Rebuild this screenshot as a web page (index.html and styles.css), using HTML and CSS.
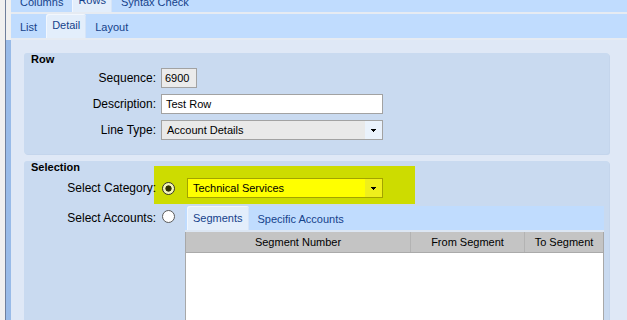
FILE: index.html
```html
<!DOCTYPE html>
<html lang="en">
<head>
  <meta charset="UTF-8" />
  <title>Row Detail</title>
  <link rel="stylesheet" href="styles.css">
</head>
<body>
  <div class="frame">
    <div class="strip strip-top">
      <span class="tab">Columns</span>
      <span class="tab active">Rows</span>
      <span class="tab">Syntax Check</span>
    </div>
    <div class="strip strip-sub">
      <span class="tab">List</span>
      <span class="tab active">Detail</span>
      <span class="tab">Layout</span>
    </div>

    <div class="content">
      <div class="panel row-panel">
        <div class="panel-title">Row</div>
        <div class="form-rows">
          <div class="form-row">
            <label class="label">Sequence:</label>
            <div class="field seq">6900</div>
          </div>
          <div class="form-row">
            <label class="label">Description:</label>
            <div class="field text">Test Row</div>
          </div>
          <div class="form-row">
            <label class="label">Line Type:</label>
            <div class="field combo">
              <span class="combo-text">Account Details</span>
              <span class="trigger">
                <svg width="5" height="3" viewBox="0 0 5 3"><rect x="0" y="0" width="5" height="1"/><rect x="1" y="1" width="3" height="1"/><rect x="2" y="2" width="1" height="1"/></svg>
              </span>
            </div>
          </div>
        </div>
      </div>

      <div class="panel sel-panel">
        <div class="panel-title">Selection</div>
        <div class="sel-row first">
          <label class="label">Select Category:</label>
          <div class="highlight">
            <span class="radio checked"></span>
            <div class="field combo yellow">
              <span class="combo-text">Technical Services</span>
              <span class="trigger">
                <svg width="5" height="3" viewBox="0 0 5 3"><rect x="0" y="0" width="5" height="1"/><rect x="1" y="1" width="3" height="1"/><rect x="2" y="2" width="1" height="1"/></svg>
              </span>
            </div>
          </div>
        </div>
        <div class="sel-row second">
          <label class="label">Select Accounts:</label>
          <span class="radio"></span>
          <div class="tabpanel">
            <div class="strip strip-inner">
              <span class="tab active">Segments</span>
              <span class="tab">Specific Accounts</span>
            </div>
            <div class="grid">
              <div class="grid-head">
                <div class="col c1">Segment Number</div>
                <div class="col c2">From Segment</div>
                <div class="col c3">To Segment</div>
              </div>
              <div class="grid-body"></div>
            </div>
          </div>
        </div>
      </div>
    </div>
  </div>
</body>
</html>
```

FILE: styles.css
```css
body {
  margin: 0;
  background: #f0f0f0;
  font-family: "Liberation Sans", Arial, sans-serif;
  font-size: 11px;
  color: #000;
  overflow: hidden;
}
.frame {
  margin-left: 5px;
  border-left: 1px solid #6f7f9c;
  height: 320px;
  overflow: hidden;
}

/* tab strips */
.strip {
  display: flex;
  gap: 3px;
  background: #c0dcfe;
  border-bottom: 2px solid #e6ebf2;
}
.tab {
  display: block;
  padding: 2px 6px 0;
  line-height: 22px;
  color: #15428b;
  white-space: nowrap;
}
.tab:first-child {
  margin-left: 3px;
}
.tab.active {
  padding-top: 0;
  padding-bottom: 2px;
  background: #e3eefb;
  border-radius: 3px 3px 0 0;
  box-shadow: inset 1px 1px 0 #f2f7fe, inset -1px 0 0 #d6e4f7;
}
.strip-top {
  margin-left: 5px;
  height: 12px;
  overflow: hidden;
}
.strip-top .tab {
  margin-top: -8px;
  height: 18px;
  line-height: 16px;
  padding-top: 2px;
}
.strip-top .tab.active {
  padding-top: 0;
  height: 20px;
}
.strip-sub {
  margin-left: 5px;
  height: 24px;
}

/* content */
.content {
  box-sizing: border-box;
  border-left: 5px solid #99bbe8;
  background: #dfe8f6;
  padding: 13px 18px 0 13px;
  height: 280px;
  overflow: hidden;
}
.panel {
  background: #c9daf0;
  border-radius: 3px;
  padding: 0 5px 14px 7px;
  box-shadow: 1px 1px 0 #c4d5ec;
}
.panel-title {
  font-weight: bold;
  line-height: 13px;
}
.form-rows {
  display: flex;
  flex-direction: column;
  gap: 6px;
  padding-top: 2px;
}
.form-row {
  display: flex;
  align-items: center;
  height: 20px;
}
.label {
  display: block;
  width: 130px;
  box-sizing: border-box;
  padding-right: 5px;
  text-align: right;
  font-size: 12px;
  line-height: 20px;
  white-space: nowrap;
  position: relative;
}

/* fields */
.field {
  box-sizing: border-box;
  height: 20px;
  border: 1px solid #a2a2a2;
  background: #fff;
  line-height: 18px;
  white-space: nowrap;
}
.seq {
  width: 36px;
  padding-left: 3px;
  background: #ebebeb;
}
.text {
  width: 222px;
  padding-left: 4px;
}
.combo {
  width: 222px;
  display: flex;
  background: #e9e9e9;
}
.combo-text {
  flex: 1;
  padding-left: 5px;
}
.trigger {
  width: 17px;
  background: #eaf2fc;
  display: flex;
  align-items: center;
  justify-content: center;
}
.trigger svg {
  display: block;
  fill: #000;
}

/* selection */
.sel-panel {
  margin-top: 7px;
  padding-bottom: 0;
  height: 170px;
}
.sel-row {
  display: flex;
  align-items: flex-start;
}
.sel-row.first {
  margin-top: -8px;
}
.sel-row.first .label {
  margin-top: 12px;
}
.highlight {
  margin-left: -7px;
  padding: 12px 32px 6px 8px;
  background: #cddc00;
  display: flex;
  align-items: center;
  gap: 12px;
}
.combo.yellow {
  width: 196px;
  background: #ffff00;
  border-color: #a3a300;
}
.combo.yellow .trigger {
  background: #efef1c;
}
.radio {
  display: block;
  width: 13px;
  height: 13px;
  box-sizing: border-box;
  border-radius: 50%;
  border: 1px solid #5a5a5a;
  background: #fff;
  flex: none;
}
.radio.checked {
  border: 1.5px solid #333;
  background: radial-gradient(circle, #303000 0 2.8px, #f4f4b6 3.4px);
}
.sel-row.second .label {
  margin-top: 4px;
}
.sel-row.second .radio {
  margin: 6px 0 0 1px;
}
.tabpanel {
  flex: 1;
  margin: 2px 0 0 10px;
}
.strip-inner {
  height: 24px;
  gap: 3px;
  border-bottom-color: #dce6f3;
}
.strip-inner .tab:first-child {
  margin-left: 2px;
}
.strip-inner .tab.active {
  padding-top: 1px;
  padding-bottom: 1px;
}

/* grid */
.grid {
  border-left: 1px solid #a8a8a8;
  border-right: 1px solid #a8a8a8;
  background: #fff;
}
.grid-head {
  display: flex;
  height: 21px;
  box-sizing: border-box;
  background: #c4c4c4;
  border-bottom: 1px solid #aaaaaa;
}
.col {
  box-sizing: border-box;
  text-align: center;
  line-height: 20px;
  white-space: nowrap;
}
.c1 {
  width: 225px;
  border-right: 1px solid #b3b3b3;
}
.c2 {
  width: 114px;
  border-right: 1px solid #b3b3b3;
}
.c3 {
  flex: 1;
}
.grid-body {
  height: 80px;
}
```
